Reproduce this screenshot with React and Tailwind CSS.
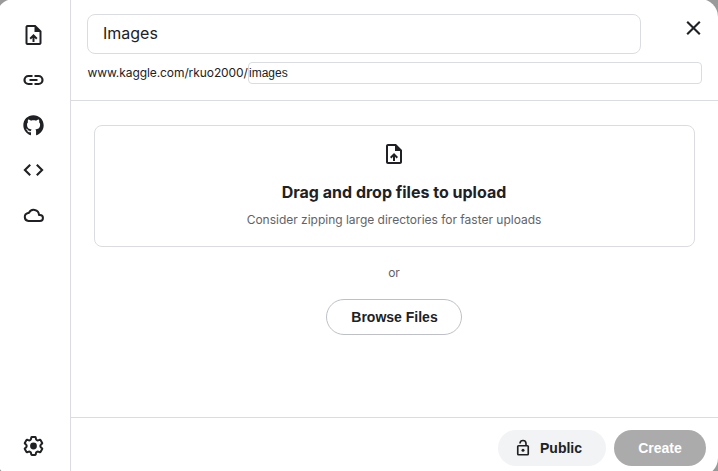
import { MdOutlineUploadFile } from "react-icons/md";
import { FaGithub } from "react-icons/fa";

function RailIcon({ children }) {
  return (
    <svg viewBox="-0.5 0 24 24" className="size-6" fill="none" stroke="currentColor" strokeWidth="2">
      {children}
    </svg>
  );
}

function Gear() {
  return (
    <RailIcon>
      <path
        d="M10.3 3h3.4q.4 0 .5.4l.3 1.7q.1.5.5.7l.9.5q.4.2.8.1l1.7-.6q.4-.1.6.2l1.7 3q.2.4-.1.6l-1.3 1.2q-.4.3-.4.7v1q0 .4.4.7l1.3 1.2q.3.2.1.6l-1.7 3q-.2.3-.6.2l-1.7-.6q-.4-.1-.8.1l-.9.5q-.4.2-.5.7l-.3 1.7q-.1.4-.5.4h-3.4q-.4 0-.5-.4l-.3-1.7q-.1-.5-.5-.7l-.9-.5q-.4-.2-.8-.1l-1.7.6q-.4.1-.6-.2l-1.7-3q-.2-.4.1-.6l1.3-1.2q.4-.3.4-.7v-1q0-.4-.4-.7L3.4 9.600q-.3-.2-.1-.6l1.7-3q.2-.3.6-.2l1.7.6q.4.1.8-.1l.9-.5q.4-.2.5-.7l.3-1.7q.1-.4.5-.4z"
        strokeLinejoin="round"
      />
      <circle cx="12" cy="12" r="3.4" fill="currentColor" stroke="none" />
    </RailIcon>
  );
}

export default function App() {
  return (
    <div className="h-[471px] w-[718px] overflow-hidden bg-[#9a9a9a] font-['Inter',sans-serif] text-[#202124]">
      <div className="-mt-px -ml-1 flex h-[477px] w-[722px] overflow-hidden rounded-[18px] bg-white">
        <aside className="flex w-[75px] shrink-0 flex-col items-center border-r border-[#dadce0] pt-6 pb-[18px]">
          <nav className="flex flex-col gap-[21px]">
            <RailIcon>
              <path
                d="M14 2H6c-1.100 0-1.990.9-1.990 2L4 20c0 1.100.89 2 1.990 2H18c1.100 0 2-.9 2-2V8l-6-6zm4 18H6V4h7v5h5v11zM8 15.010l1.410 1.410L11 14.840V19h2v-4.160l1.590 1.590L16 15.010 12.010 11 8 15.010z"
                fill="currentColor"
                stroke="none"
              />
            </RailIcon>
            <RailIcon>
              <path d="M11 8H7a4 4 0 0 0 0 8h4M13 8h4a4 4 0 0 1 0 8h-4M8 12h8" strokeWidth="2.200" />
            </RailIcon>
            <span className="flex size-6 items-center justify-center">
              <FaGithub className="size-[21px]" />
            </span>
            <RailIcon>
              <path d="M8.700 6.700 3.400 12l5.300 5.300M15.300 6.700l5.300 5.300-5.300 5.300" strokeWidth="2.100" />
            </RailIcon>
            <RailIcon>
              <path
                d="M7 18a4.100 4.100 0 0 1-.4-8.100h.8A5.300 5.300 0 0 1 17.500 11.900h.9a3.050 3.050 0 0 1 0 6.100z"
                strokeLinejoin="round"
              />
            </RailIcon>
          </nav>
          <div className="mt-auto">
            <Gear />
          </div>
        </aside>
        <main className="flex min-w-0 flex-1 flex-col">
          <header className="h-[102px] shrink-0 border-b border-[#dadce0] pt-[15px] pr-4 pl-4">
            <div className="flex">
              <div className="flex h-10 w-[554px] shrink-0 items-center rounded-lg border border-[#dadce0] px-[15px] pb-0.5 text-base">Images</div>
              <svg viewBox="-0.5 0 24 24" className="mt-0.5 ml-10 size-6 shrink-0" stroke="currentColor" strokeWidth="2.100">
                <path d="M5.700 5.700l12.600 12.600M18.300 5.700 5.700 18.300" />
              </svg>
            </div>
            <div className="mt-2 flex h-[22px] items-center text-xs">
              <span className="w-[161px] shrink-0 pl-[0.5px] tracking-[-0.08px]">www.kaggle.com/rkuo2000/</span>
              <div className="flex h-[22px] flex-1 items-center rounded border border-[#dadce0] font-['Liberation_Sans',sans-serif]">images</div>
            </div>
          </header>
          <section className="flex flex-1 flex-col items-center pt-6">
            <div className="flex h-[122px] w-[601px] flex-col items-center rounded-lg border border-[#dadce0] pt-4 pr-px">
              <MdOutlineUploadFile className="size-6" />
              <h2 className="mt-4 text-base leading-5 font-bold">Drag and drop files to upload</h2>
              <p className="mt-2.5 text-xs leading-4 tracking-[-0.01px] text-[#5f6368]">Consider zipping large directories for faster uploads</p>
            </div>
            <p className="mt-[18px] mr-px text-xs leading-4 text-[#5f6368]">or</p>
            <button className="mt-[18px] mr-px h-9 w-[136px] rounded-full border border-[#bdc1c6] pl-px font-['Liberation_Sans',sans-serif] text-sm font-bold">Browse Files</button>
          </section>
          <footer className="flex h-[59px] shrink-0 justify-end gap-2 border-t border-[#dadce0] pt-3 pr-3 font-['Liberation_Sans',sans-serif] text-sm font-bold">
            <button className="flex h-9 w-[108px] items-center rounded-full bg-[#f1f3f4] pl-4">
              <svg viewBox="0 0 24 24" className="mr-2 size-[18px]" fill="none" stroke="currentColor" strokeWidth="2.200">
                <rect x="5" y="9" width="14" height="12" rx="1" />
                <path d="M8 6a4 4 0 0 1 8 0v3" />
                <circle cx="12" cy="15" r="2" fill="currentColor" stroke="none" />
              </svg>
              Public
            </button>
            <button className="h-9 w-[92px] rounded-full bg-[#ababac] text-white">Create</button>
          </footer>
        </main>
      </div>
    </div>
  );
}
